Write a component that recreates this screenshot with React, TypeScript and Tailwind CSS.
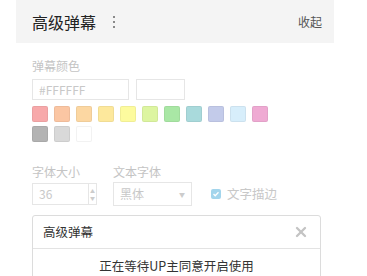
import { X } from "lucide-react";

const swatches = [
  "#f7a9aa",
  "#fbc6a3",
  "#fcd7a2",
  "#fde89c",
  "#fdfb9e",
  "#ddf5a1",
  "#a9e7a5",
  "#a9dadc",
  "#c3cbea",
  "#d7eefb",
  "#efaad3",
  "#b3b3b3",
  "#d9d9d9",
  "#ffffff",
];

export default function App() {
  return (
    <div
      className="w-[367px] h-[276px] bg-white overflow-hidden"
      style={{ fontFamily: '"Noto Sans CJK SC", "Noto Sans", sans-serif' }}
    >
      <div className="ml-4 w-[318px] h-[43px] bg-[#f4f4f4] flex items-center px-4">
        <span className="text-[16px] text-[#222]">高级弹幕</span>
        <div className="ml-[17px] flex flex-col gap-[3px]">
          <span className="w-[2px] h-[2px] bg-[#666] rounded-full" />
          <span className="w-[2px] h-[2px] bg-[#666] rounded-full" />
          <span className="w-[2px] h-[2px] bg-[#666] rounded-full" />
        </div>
        <span className="ml-auto mr-[-4px] text-[12px] text-[#555]">收起</span>
      </div>

      <div className="pl-8 pt-[15px]">
        <div className="text-[12px] leading-[16px] text-[#c4c4c4]">弹幕颜色</div>
        <div className="flex gap-[7px] mt-[5px]">
          <div className="w-[97px] h-[21px] border border-[#e6e6e6] px-[6px] text-[12px] leading-[19px] text-[#c8c8c8]">
            #FFFFFF
          </div>
          <div className="w-[49px] h-[21px] border border-[#e6e6e6]" />
        </div>
        <div className="w-[245px] flex flex-wrap gap-x-[6px] gap-y-[4px] mt-[6px]">
          {swatches.map((c, i) => (
            <span
              key={i}
              className="w-4 h-4 rounded-[2px] border border-black/5"
              style={{ backgroundColor: c }}
            />
          ))}
        </div>

        <div className="flex mt-[22px]">
          <div className="w-[81px]">
            <div className="text-[12px] leading-[16px] text-[#c4c4c4]">字体大小</div>
            <div className="mt-[3px] w-[65px] h-[22px] border border-[#e6e6e6] flex items-center">
              <span className="pl-[6px] text-[12px] text-[#c8c8c8] flex-1">36</span>
              <div className="w-[8px] h-full border-l border-[#e6e6e6] flex flex-col items-center justify-center text-[5px] leading-[7px] text-[#ccc]">
                <span>▲</span>
                <span>▼</span>
              </div>
            </div>
          </div>
          <div>
            <div className="text-[12px] leading-[16px] text-[#c4c4c4]">文本字体</div>
            <div className="mt-[2px] w-[79px] h-[24px] border border-[#e6e6e6] flex items-center px-[6px]">
              <span className="text-[12px] text-[#c8c8c8] flex-1">黑体</span>
              <span className="text-[6px] text-[#ccc]">▼</span>
            </div>
          </div>
          <div className="ml-[19px] mt-[24px] flex items-center gap-[6px] h-[12px]">
            <span className="w-[10px] h-[10px] rounded-[2px] bg-[#a3d5ec] flex items-center justify-center">
              <svg width="8" height="8" viewBox="0 0 8 8">
                <path d="M1.5 4l1.7 1.7L6.5 2.3" stroke="white" strokeWidth="1.3" fill="none" />
              </svg>
            </span>
            <span className="text-[12.5px] text-[#c8c8c8]">文字描边</span>
          </div>
        </div>

        <div className="mt-[9px] w-[289px] border border-[#dcdcdc] rounded-t-[3px]">
          <div className="h-[33px] flex items-center px-[10px] border-b border-[#e3e3e3]">
            <span className="text-[12.5px] text-[#333]">高级弹幕</span>
            <X className="ml-auto mr-[1px] w-[16px] h-[16px] text-[#c4c4c4]" strokeWidth={3.5} />
          </div>
          <div className="h-[40px] pt-[8px] text-center text-[12.5px] text-[#333]">
            正在等待UP主同意开启使用
          </div>
        </div>
      </div>
    </div>
  );
}
